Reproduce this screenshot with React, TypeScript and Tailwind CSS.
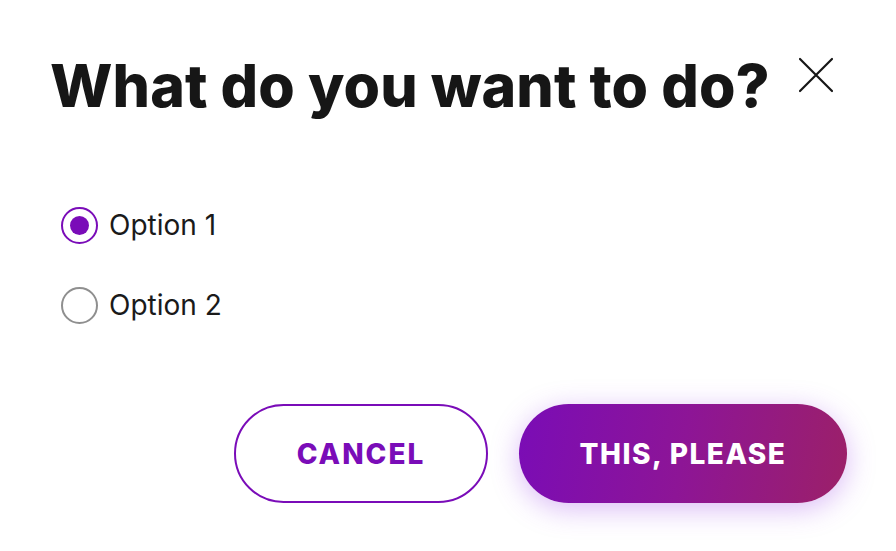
import { useState } from 'react'

const options = ['Option 1', 'Option 2']

export default function App() {
  const [selected, setSelected] = useState(0)

  return (
    <div className="flex h-[551px] w-[896px] flex-col bg-white pl-[50px] pr-[49px] font-['Inter',sans-serif] text-[#161616]">
      {/* Title row */}
      <div className="mt-[50px] flex items-start justify-between">
        <h1 className="text-[59px] font-extrabold leading-[72px] tracking-[0.1px]">What do you want to do?</h1>
        <button className="mr-[12px] mt-[6px] text-[#161616]" aria-label="Close">
          <svg width="38" height="38" viewBox="0 0 38 38" fill="none" stroke="currentColor" strokeWidth="2.2" strokeLinecap="round">
            <path d="M3 3L35 35M35 3L3 35" />
          </svg>
        </button>
      </div>

      {/* Options */}
      <div className="ml-[11px] mt-[84px] flex flex-col gap-[42px]">
        {options.map((label, i) => (
          <label key={label} className="flex cursor-pointer items-center gap-[11px]" onClick={() => setSelected(i)}>
            <span
              className={`flex h-[37px] w-[37px] items-center justify-center rounded-full border-2 ${
                selected === i ? 'border-[#7a0cb8]' : 'border-[#8f8f8f]'
              }`}
            >
              {selected === i && <span className="h-[19px] w-[19px] rounded-full bg-[#7a0cb8]" />}
            </span>
            <span className="text-[28px] leading-[38px] text-[#1a1a1a]">{label}</span>
          </label>
        ))}
      </div>

      {/* Actions */}
      <div className="mt-[80px] flex justify-end gap-[31px]">
        <button className="h-[99px] w-[254px] rounded-full border-2 border-[#7a0cb8] text-[28px] font-extrabold tracking-[2px] text-[#7a0cb8]">
          CANCEL
        </button>
        <button className="h-[99px] w-[328px] rounded-full bg-[linear-gradient(100deg,#7a0cb6_0%,#8d1596_50%,#9c2068_100%)] text-[28px] font-extrabold tracking-[1.5px] text-white shadow-[0_6px_28px_rgba(150,60,230,0.35)]">
          THIS, PLEASE
        </button>
      </div>
    </div>
  )
}
